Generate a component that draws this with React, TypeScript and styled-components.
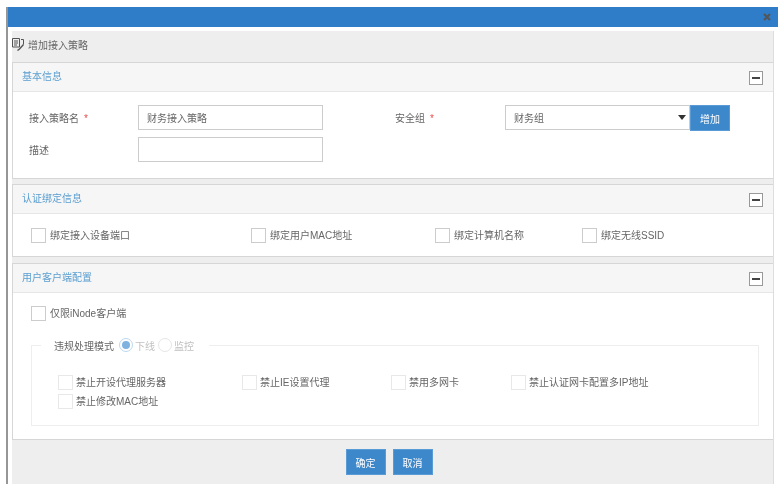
import React from "react";
import styled, { createGlobalStyle } from "styled-components";

const Global = createGlobalStyle`
  html, body { margin: 0; padding: 0; background: #fff; }
  body { font-family: "Liberation Sans", "Noto Sans CJK SC", sans-serif; font-size: 10px; color: #666; }
  *, *::before, *::after { box-sizing: border-box; }
`;
const Page = styled.div`
  width: 778px; height: 484px; overflow: hidden; padding: 7px 0 0 6px; background: #fff; filter: blur(0.35px);
`;
const Shell = styled.div`
  height: 477px; border-left: 2px solid #969696; display: flex; flex-direction: column;
`;
const TitleBar = styled.div`
  height: 20px; flex: none; background: #2f7cc9; display: flex; align-items: center; justify-content: flex-end; padding-right: 7px; color: #555;
`;
const Body = styled.div`
  flex: 1; margin: 4px 4px 0; background: #eee; display: flex; flex-direction: column; border-right: 1px solid #ddd;
`;
const PageTitle = styled.div`
  height: 31px; flex: none; display: flex; align-items: center; gap: 3px; color: #666; font-size: 10px; padding-bottom: 4px;
`;
const Panel = styled.section<{ $h: number; $mt?: number }>`
  height: ${p => p.$h}px; margin-top: ${p => p.$mt ?? 0}px; flex: none; background: #fff;
  border: 1px solid #d6d6d6; border-right: none;
`;
const PanelHead = styled.header`
  height: 29px; background: #f6f6f6; border-bottom: 1px solid #e6e6e6; display: flex; align-items: center; justify-content: space-between;
  padding: 0 10px 3px 9px; color: #5b9fd0; font-size: 10px;
`;
const Collapse = styled.button`
  width: 14px; height: 14px; margin-top: 4px; padding: 0; background: #fff; border: 1px solid #999; display: flex; align-items: center; justify-content: center;
  &::before { content: ""; width: 8px; height: 2px; background: #444; }
`;
const BasicGrid = styled.div`
  display: grid; grid-template-columns: 125px 185px 182px 185px 40px; grid-auto-rows: 25px; row-gap: 7px; padding: 13px 0 0 0; align-items: center;
`;
const Label = styled.label<{ $pad: number }>`
  padding-left: ${p => p.$pad}px; color: #666; font-size: 10px;
  & > b { color: #e45050; font-weight: 400; margin-left: 5px; }
`;
const TextBox = styled.div`
  height: 25px; border: 1px solid #ccc; background: #fff; display: flex; align-items: center; padding: 0 8px; color: #666; font-size: 10px;
`;
const SelectBox = styled(TextBox)`
  justify-content: space-between; padding-right: 3px;
  &::after { content: ""; border: 4px solid transparent; border-top: 5px solid #333; border-bottom: 0; box-sizing: content-box; }
`;
const Btn = styled.button`
  width: 40px; height: 26px; padding: 0; border: 1px solid #5a9bd5; background: #3d88cb; color: #fff;
  font: inherit; font-size: 10px; display: block; align-self: start;
`;
const CheckRow = styled.div<{ $pt: number; $pl: number }>`
  display: flex; padding: ${p => p.$pt}px 0 0 ${p => p.$pl}px;
`;
const Check = styled.div<{ $w?: number; $light?: boolean }>`
  width: ${p => (p.$w ? `${p.$w}px` : "auto")}; flex: none; display: flex; align-items: flex-start; gap: ${p => (p.$light ? 3 : 4)}px; height: 15px; line-height: 15px; color: #666; font-size: 10px; white-space: nowrap;
  &::before { content: ""; width: 15px; height: 15px; flex: none; background: #fff; border: 1px solid ${p => (p.$light ? "#e8e8e8" : "#ccc")}; }
`;
const Field = styled.fieldset`
  margin: 17px 14px 0 18px; padding: 0 0 0 26px; height: 88px; border: 1px solid #eee; min-width: 0;
`;
const Legend = styled.legend`
  margin-left: -17px; padding: 0 15px 0 13px; display: flex; align-items: center; height: 14px; color: #666; font-size: 10px; margin-bottom: 23px;
`;
const Radio = styled.i<{ $on?: boolean; $gap: number }>`
  width: 14px; height: 14px; flex: none; border-radius: 50%; border: 1px solid ${p => (p.$on ? "#bcd8ef" : "#e6e6e6")}; margin: 0 2px 0 ${p => p.$gap}px;
  display: flex; align-items: center; justify-content: center;
  &::after { content: ""; width: 8px; height: 8px; border-radius: 50%; background: ${p => (p.$on ? "#7fb2de" : "transparent")}; }
`;
const Muted = styled.span`
  color: #c0c0c0;
`;
const InnerRow = styled.div`
  display: flex; height: 15px; margin-bottom: 4px;
`;
const Footer = styled.div`
  display: flex; justify-content: center; gap: 7px; padding-top: 9px; padding-right: 7px;
`;

const TitleIcon = () => (
  <svg width="13" height="13" viewBox="0 0 13 13" fill="none" stroke="#555" strokeWidth="1">
    <path d="M0.5 0.5h7v8.5h-7z" />
    <path d="M2 3h4M2 5h4M2 7h3" />
    <path d="M9 1.5h2.5v5" />
    <path d="M11.5 6.5L7.5 11l-2 1.5" strokeWidth="1.4" />
  </svg>
);
const CloseIcon = () => (
  <svg width="8" height="8" viewBox="0 0 8 8" stroke="#555" strokeWidth="2">
    <path d="M1 1l6 6M7 1L1 7" />
  </svg>
);

export default function App() {
  return (
    <Page>
      <Global />
      <Shell>
        <TitleBar><CloseIcon /></TitleBar>
        <Body>
          <PageTitle><TitleIcon />增加接入策略</PageTitle>
          <Panel $h={117}>
            <PanelHead>基本信息<Collapse /></PanelHead>
            <BasicGrid>
              <Label $pad={16}>接入策略名<b>*</b></Label>
              <TextBox>财务接入策略</TextBox>
              <Label $pad={72}>安全组<b>*</b></Label>
              <SelectBox>财务组</SelectBox>
              <Btn>增加</Btn>
              <Label $pad={16}>描述</Label>
              <TextBox />
            </BasicGrid>
          </Panel>
          <Panel $h={73} $mt={5}>
            <PanelHead>认证绑定信息<Collapse /></PanelHead>
            <CheckRow $pt={14} $pl={18}>
              <Check $w={220}>绑定接入设备端口</Check>
              <Check $w={184}>绑定用户MAC地址</Check>
              <Check $w={147}>绑定计算机名称</Check>
              <Check>绑定无线SSID</Check>
            </CheckRow>
          </Panel>
          <Panel $h={177} $mt={6}>
            <PanelHead>用户客户端配置<Collapse /></PanelHead>
            <CheckRow $pt={13} $pl={18}>
              <Check>仅限iNode客户端</Check>
            </CheckRow>
            <Field>
              <Legend>
                违规处理模式
                <Radio $on $gap={5} /><Muted>下线</Muted>
                <Radio $gap={3} /><Muted>监控</Muted>
              </Legend>
              <InnerRow>
                <Check $w={184} $light>禁止开设代理服务器</Check>
                <Check $w={149} $light>禁止IE设置代理</Check>
                <Check $w={120} $light>禁用多网卡</Check>
                <Check $light>禁止认证网卡配置多IP地址</Check>
              </InnerRow>
              <InnerRow>
                <Check $light>禁止修改MAC地址</Check>
              </InnerRow>
            </Field>
          </Panel>
          <Footer>
            <Btn>确定</Btn>
            <Btn>取消</Btn>
          </Footer>
        </Body>
      </Shell>
    </Page>
  );
}
